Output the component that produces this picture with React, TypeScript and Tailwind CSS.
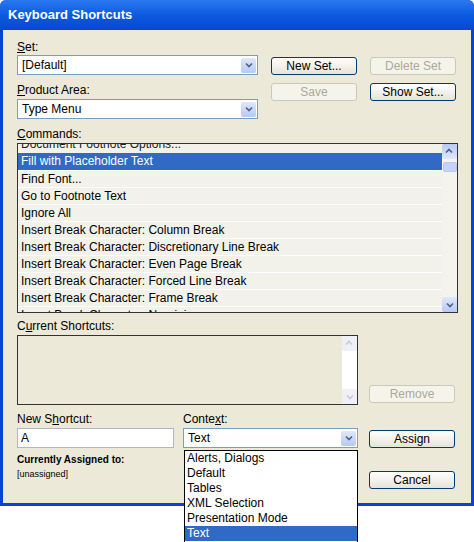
import React from "react";

const font = { fontFamily: '"Liberation Sans", Arial, sans-serif' };

function Btn({ children, disabled, w = "w-[86px]" }: { children: React.ReactNode; disabled?: boolean; w?: string }) {
  return (
    <div
      className={`${w} h-[18px] rounded-[3px] flex items-center justify-center text-[12px] ${
        disabled
          ? "border border-[#cac8bb] text-[#aca899] bg-[#f5f4ea]"
          : "border border-[#003c74] text-black bg-gradient-to-b from-white to-[#e6e4d8]"
      }`}
    >
      {children}
    </div>
  );
}

function Arrow({ dim }: { dim?: boolean }) {
  return (
    <div className={`w-[15px] h-[15px] rounded-[2px] flex items-center justify-center ${dim ? "bg-[#eef0f5]" : "bg-gradient-to-b from-[#dfe8fb] to-[#b6caf5]"}`}>
      <svg width="8" height="6" viewBox="0 0 8 6">
        <path d="M1 1.5 L4 4.5 L7 1.5" stroke={dim ? "#c8cbd5" : "#4d6185"} strokeWidth="1.6" fill="none" />
      </svg>
    </div>
  );
}

function Select({ value, w }: { value: string; w: string }) {
  return (
    <div className={`${w} h-[20px] border border-[#7f9db9] bg-white flex items-center justify-between pl-[4px] pr-[1px] text-[12px]`}>
      <span>{value}</span>
      <Arrow />
    </div>
  );
}

const cmds = [
  "Fill with Placeholder Text",
  "Find Font...",
  "Go to Footnote Text",
  "Ignore All",
  "Insert Break Character: Column Break",
  "Insert Break Character: Discretionary Line Break",
  "Insert Break Character: Even Page Break",
  "Insert Break Character: Forced Line Break",
  "Insert Break Character: Frame Break",
  "Insert Break Character: Non-joiner",
];

export default function App() {
  return (
    <div className="w-[474px] h-[542px] bg-white relative overflow-hidden" style={font}>
      <div className="h-[506px] bg-[#0842d8] rounded-t-[6px] flex flex-col px-[3px] pb-[3px]">
        <div className="h-[30px] bg-gradient-to-b from-[#2b78f0] via-[#0a5ae0] to-[#0848d0] rounded-t-[6px] -mx-[3px] flex items-center pl-[8px]">
          <span className="text-white font-bold text-[13px]">Keyboard Shortcuts</span>
        </div>
        <div className="flex-1 bg-[#ece9d8] pl-[14px] pr-[16px] text-[12px] text-black">
          <div className="flex mt-[9px]">
            <div className="flex flex-col">
              <div className="h-[16px] leading-[16px]"><u>S</u>et:</div>
              <Select value="[Default]" w="w-[241px]" />
            </div>
            <div className="ml-[13px] mt-[18px]"><Btn>New Set...</Btn></div>
            <div className="ml-[13px] mt-[18px]"><Btn disabled>Delete Set</Btn></div>
          </div>
          <div className="flex mt-[7px]">
            <div className="flex flex-col">
              <div className="h-[17px] leading-[17px]"><u>P</u>roduct Area:</div>
              <Select value="Type Menu" w="w-[241px]" />
            </div>
            <div className="ml-[13px] mt-[1px]"><Btn disabled>Save</Btn></div>
            <div className="ml-[13px] mt-[1px]"><Btn>Show Set...</Btn></div>
          </div>
          <div className="h-[17px] leading-[17px] mt-[7px]"><u>C</u>ommands:</div>
          <div className="w-[441px] h-[170px] border border-[#333] bg-white flex overflow-hidden">
            <div className="flex-1 flex flex-col overflow-hidden">
              <div className="h-[9px] shrink-0 overflow-hidden pl-[3px] text-[#222] bg-[#f3f2ea]">
                <div className="leading-[16px] -mt-[8px]">Document Footnote Options...</div>
              </div>
              {cmds.map((c, i) => (
                <div
                  key={c}
                  className={`h-[17px] shrink-0 leading-[16px] pl-[3px] ${i === 0 ? "bg-[#316ac5] text-white" : "bg-[#f3f2ea] border-t border-white"}`}
                >
                  {c}
                </div>
              ))}
            </div>
            <div className="w-[15px] bg-[#f4f3ee] flex flex-col justify-between items-center">
              <div className="flex flex-col items-center gap-[3px]">
                <div className="rotate-180"><Arrow /></div>
                <div className="w-[14px] h-[10px] rounded-[2px] bg-[#c3d3fd] border border-[#b8c9f1]" />
              </div>
              <Arrow />
            </div>
          </div>
          <div className="h-[17px] leading-[17px] mt-[5px]">C<u>u</u>rrent Shortcuts:</div>
          <div className="flex items-end">
            <div className="w-[342px] h-[70px] border border-[#333] bg-[#ece9d8] flex justify-end">
              <div className="w-[15px] bg-white flex flex-col justify-between">
                <div className="rotate-180"><Arrow dim /></div>
                <Arrow dim />
              </div>
            </div>
            <div className="ml-[11px] mb-[2px]"><Btn disabled>Remove</Btn></div>
          </div>
          <div className="flex mt-[6px]">
            <div className="flex flex-col w-[167px]">
              <div className="h-[17px] leading-[17px]">New S<u>h</u>ortcut:</div>
              <div className="w-[157px] h-[20px] border border-[#b0b7c6] bg-white pl-[3px] leading-[18px]">A</div>
              <div className="text-[10px] font-bold mt-[4px]">Currently Assigned to:</div>
              <div className="text-[9px] mt-[1px]">[unassigned]</div>
            </div>
            <div className="flex flex-col">
              <div className="h-[17px] leading-[17px]">Conte<u>x</u>t:</div>
              <Select value="Text" w="w-[175px]" />
            </div>
            <div className="ml-[11px] flex flex-col mt-[19px]">
              <Btn>Assign</Btn>
              <div className="mt-[23px]"><Btn>Cancel</Btn></div>
            </div>
          </div>
        </div>
      </div>
      <div className="absolute left-[184px] top-[450px] w-[174px] h-[100px] border border-black bg-white text-[12px] flex flex-col">
        {["Alerts, Dialogs", "Default", "Tables", "XML Selection", "Presentation Mode", "Text"].map((t) => (
          <div key={t} className={`h-[15px] leading-[15px] pl-[2px] ${t === "Text" ? "bg-[#316ac5] text-white" : ""}`}>{t}</div>
        ))}
      </div>
    </div>
  );
}
